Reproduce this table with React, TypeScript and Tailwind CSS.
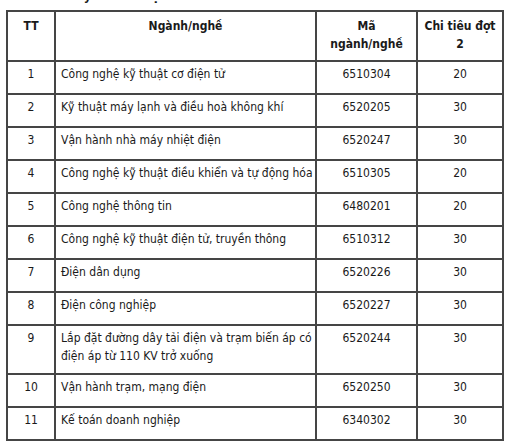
import React from 'react';

const rows = [
  { tt: '1', name: ['Công nghệ kỹ thuật cơ điện tử'], code: '6510304', quota: '20' },
  { tt: '2', name: ['Kỹ thuật máy lạnh và điều hoà không khí'], code: '6520205', quota: '30' },
  { tt: '3', name: ['Vận hành nhà máy nhiệt điện'], code: '6520247', quota: '30' },
  { tt: '4', name: ['Công nghệ kỹ thuật điều khiển và tự động hóa'], code: '6510305', quota: '20' },
  { tt: '5', name: ['Công nghệ thông tin'], code: '6480201', quota: '20' },
  { tt: '6', name: ['Công nghệ kỹ thuật điện tử, truyền thông'], code: '6510312', quota: '30' },
  { tt: '7', name: ['Điện dân dụng'], code: '6520226', quota: '30' },
  { tt: '8', name: ['Điện công nghiệp'], code: '6520227', quota: '30' },
  { tt: '9', name: ['Lắp đặt đường dây tải điện và trạm biến áp có', 'điện áp từ 110 KV trở xuống'], code: '6520244', quota: '30' },
  { tt: '10', name: ['Vận hành trạm, mạng điện'], code: '6520250', quota: '30' },
  { tt: '11', name: ['Kế toán doanh nghiệp'], code: '6340302', quota: '30' },
];

const cell = 'border-2 border-[#454545] align-top';

export default function App() {
  return (
    <div
      className="w-[510px] h-[446px] overflow-hidden bg-white text-[#1a1a1a] text-[12px] leading-[18px]"
      style={{ fontFamily: '"DejaVu Sans Condensed", "DejaVu Sans", sans-serif' }}
    >
      {/* heading above the table, mostly scrolled out of view */}
      <div className="h-[10px] overflow-hidden relative">
        <p className="absolute left-[15px] bottom-[6px] font-bold text-[13px] leading-[16px] whitespace-nowrap">
          Chỉ tiêu tuyển sinh đợt 2 năm 2021
        </p>
      </div>
      <table className="ml-[6px] table-fixed border-collapse border-2 border-[#454545] w-[496px]">
        <colgroup>
          <col className="w-[48px]" />
          <col className="w-[261px]" />
          <col className="w-[101px]" />
          <col className="w-[86px]" />
        </colgroup>
        <thead>
          <tr className="h-[50px] font-bold">
            <th className={`${cell} pt-[5px] text-center`}>TT</th>
            <th className={`${cell} pt-[5px] text-center`}>Ngành/nghề</th>
            <th className={`${cell} pt-[5px] text-center`}>
              Mã
              <br />
              ngành/nghề
            </th>
            <th className={`${cell} pt-[5px] text-center`}>
              Chi tiêu đợt
              <br />2
            </th>
          </tr>
        </thead>
        <tbody>
          {rows.map((r) => (
            <tr key={r.tt} className={r.name.length > 1 ? 'h-[49px]' : 'h-[33px]'}>
              <td className={`${cell} pt-[3px] text-center`}>{r.tt}</td>
              <td className={`${cell} pt-[3px] pl-[5px] pr-[2px] whitespace-nowrap`}>
                {r.name.map((l, i) => (
                  <div key={i}>{l}</div>
                ))}
              </td>
              <td className={`${cell} pt-[3px] text-center`}>{r.code}</td>
              <td className={`${cell} pt-[3px] text-center`}>{r.quota}</td>
            </tr>
          ))}
        </tbody>
      </table>
    </div>
  );
}
